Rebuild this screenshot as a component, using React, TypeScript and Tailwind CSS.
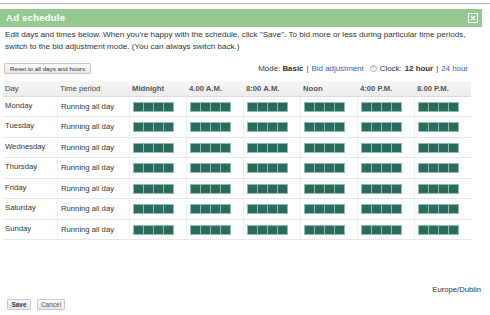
const DAYS = ["Monday", "Tuesday", "Wednesday", "Thursday", "Friday", "Saturday", "Sunday"];
const SLOTS = ["Midnight", "4.00 A.M.", "8:00 A.M.", "Noon", "4:00 P.M.", "8.00 P.M."];

function Blocks() {
  return (
    <div className="flex gap-[1px] border border-[#8cbdb1] bg-[#8cbdb1] w-fit">
      {[0, 1, 2, 3].map((i) => (
        <div key={i} className="w-[9px] h-[8px] bg-[#2d6a5e]" />
      ))}
    </div>
  );
}

export default function App() {
  return (
    <div className="w-[490px] h-[315px] bg-white pt-[3px] text-[7.7px] text-[#333] overflow-hidden font-['Liberation_Sans',Arial,sans-serif]">
      <div className="h-px bg-[#b3b3b3]" />
      <div className="mt-[5px] w-[482px] h-[18px] bg-[#94c994] flex items-center justify-between pl-[6px] pr-[4px]">
        <span className="text-white font-bold text-[9.6px] tracking-[0.2px]">Ad schedule</span>
        <svg width="10" height="10" viewBox="0 0 10 10">
          <rect x="0.5" y="0.5" width="9" height="9" fill="none" stroke="#fff" strokeWidth="1" />
          <path d="M3 3 L7 7 M7 3 L3 7" stroke="#fff" strokeWidth="1.3" />
        </svg>
      </div>

      <p className="mt-[2px] px-[5px] leading-[12px] text-[8.1px]">
        Edit days and times below. When you're happy with the schedule, click "Save". To bid more or less during particular time periods,
        <br />
        switch to the bid adjustment mode. (You can always switch back.)
      </p>

      <div className="mt-[10px] flex items-center justify-between pl-[4px] pr-[22px]">
        <button className="h-[11px] px-[5px] text-[6.2px] leading-none border border-[#c8c8c8] rounded-[1px] bg-gradient-to-b from-[#fafafa] to-[#e9e9e9] text-[#333]">
          Reset to all days and hours
        </button>
        <div className="flex items-center gap-[3px] text-[#333] text-[7.9px]">
          <span>
            Mode: <b>Basic</b>
          </span>
          <span>|</span>
          <span className="text-[#2a5fc4]">Bid adjustment</span>
          <span className="ml-[3px] w-[7px] h-[7px] rounded-full border border-[#aaa] text-[#999] text-[5px] leading-none flex items-center justify-center">
            ?
          </span>
          <span>Clock:</span>
          <b>12 hour</b>
          <span>|</span>
          <span className="text-[#2a5fc4]">24 hour</span>
        </div>
      </div>

      <div className="mt-[6px] ml-[3px] w-[468px]">
        <div className="flex h-[16px] items-center bg-gradient-to-b from-[#f7f7f7] to-[#ececec] border-b border-[#dcdcdc] text-[#444] font-medium">
          <div className="w-[54px] pl-[2px]">Day</div>
          <div className="w-[72px] pl-[3px]">Time period</div>
          {SLOTS.map((s) => (
            <div key={s} className="w-[57px] pl-[3px] font-bold text-[#555]">
              {s}
            </div>
          ))}
        </div>
        {DAYS.map((d) => (
          <div key={d} className="flex h-[20.5px] border-b border-[#e6e6e6]">
            <div className="w-[54px] pl-[2px] pt-[3px]">{d}</div>
            <div className="w-[72px] pl-[3px] border-l border-[#efefef] flex items-center">Running all day</div>
            {SLOTS.map((s) => (
              <div key={s} className="w-[57px] pl-[3px] border-l border-[#efefef] flex items-center">
                <Blocks />
              </div>
            ))}
          </div>
        ))}
      </div>

      <div className="mt-[44px] pr-[9px] text-right leading-[12px]">Europe/Dublin</div>

      <div className="mt-[3px] pl-[7px] flex gap-[6px]">
        <button className="h-[11px] w-[24px] text-[6.5px] font-bold leading-none border border-[#c8c8c8] rounded-[1px] bg-gradient-to-b from-[#fafafa] to-[#e9e9e9]">
          Save
        </button>
        <button className="h-[11px] w-[28px] text-[6.5px] leading-none border border-[#c8c8c8] rounded-[1px] bg-gradient-to-b from-[#fafafa] to-[#e9e9e9] text-[#555]">
          Cancel
        </button>
      </div>
    </div>
  );
}
